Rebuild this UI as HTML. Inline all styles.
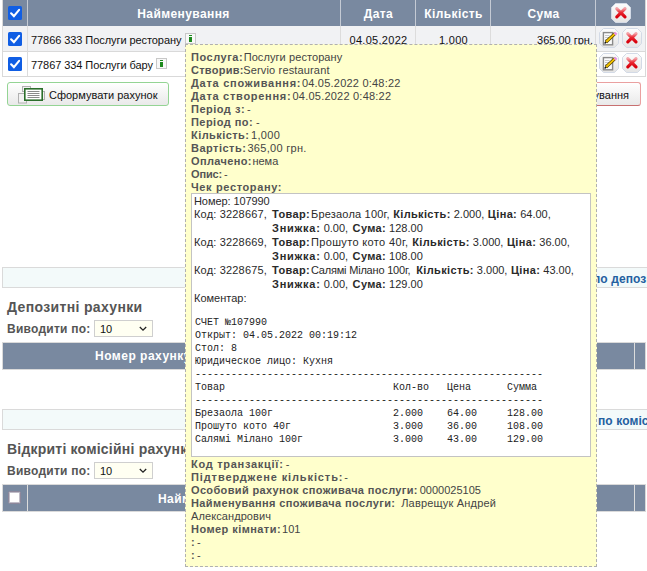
<!DOCTYPE html>
<html><head><meta charset="utf-8">
<style>
html,body{margin:0;padding:0;background:#fff;}
body{width:647px;height:571px;overflow:hidden;position:relative;font-family:"Liberation Sans",sans-serif;}
.a{position:absolute;white-space:pre;}
.hd{position:absolute;background:#7989a0;}
.vl{position:absolute;width:1px;}
.ht{position:absolute;color:#fff;font-weight:bold;font-size:12px;line-height:14px;white-space:pre;letter-spacing:0.4px;}
.td{position:absolute;color:#111;font-size:11px;line-height:13px;white-space:pre;}
.rw{letter-spacing:-0.07px;}
.cb{position:absolute;width:14px;height:14px;border-radius:1.5px;background:#105ee4;}
.cb svg{position:absolute;left:0;top:0;}
.oct{position:absolute;width:20px;height:20px;}
.info{position:absolute;width:9px;height:9px;border:1px solid #c8c8c8;background:#f8f8f8;}
.info:before{content:"";position:absolute;left:3px;top:1px;width:3px;height:1px;background:#1d8a1d;}
.info:after{content:"";position:absolute;left:3px;top:3px;width:3px;height:5px;background:#1d8a1d;}
.sec{position:absolute;color:#555;font-weight:bold;white-space:pre;}
.sel{position:absolute;width:57px;height:15px;border:1px solid #cfcfcf;background:#fffff2;}
.tt{position:absolute;left:185px;top:44px;width:410px;height:521px;border:1px dashed #b0b0b0;background:#ffffcc;}
.ln{position:absolute;left:191px;font-size:11px;line-height:13px;color:#444;white-space:pre;}
.ln b{color:#555;}
.rc{position:absolute;left:194px;font-size:11px;line-height:13px;color:#2a2a2a;white-space:pre;}
.rc b{letter-spacing:0.35px;}
.ib{display:inline-block;}
.mono{position:absolute;left:195px;font-family:"Liberation Mono",monospace;font-size:10px;line-height:13px;color:#222;white-space:pre;}
</style></head><body>

<!-- ===== top table ===== -->
<div class="hd" style="left:2px;top:0;width:643px;height:26px;"></div>
<div style="position:absolute;left:2px;top:26px;width:643px;height:25px;background:#f1f2f4;"></div>
<div style="position:absolute;left:2px;top:51px;width:643px;height:1px;background:#d9d9d9;"></div>
<div style="position:absolute;left:2px;top:76px;width:643px;height:1px;background:#d9d9d9;"></div>
<div style="position:absolute;left:2px;top:0;width:1px;height:77px;background:#d9d9d9;"></div>
<div style="position:absolute;left:645px;top:0;width:1px;height:77px;background:#d9d9d9;"></div>
<!-- header dividers -->
<div class="vl" style="left:27px;top:0;height:26px;background:#c4cad4;"></div>
<div class="vl" style="left:340px;top:0;height:26px;background:#c4cad4;"></div>
<div class="vl" style="left:415px;top:0;height:26px;background:#c4cad4;"></div>
<div class="vl" style="left:490px;top:0;height:26px;background:#c4cad4;"></div>
<div class="vl" style="left:595px;top:0;height:26px;background:#c4cad4;"></div>
<!-- body dividers -->
<div class="vl" style="left:27px;top:26px;height:50px;background:#dcdcdc;"></div>
<div class="vl" style="left:340px;top:26px;height:50px;background:#dcdcdc;"></div>
<div class="vl" style="left:415px;top:26px;height:50px;background:#dcdcdc;"></div>
<div class="vl" style="left:490px;top:26px;height:50px;background:#dcdcdc;"></div>
<div class="vl" style="left:595px;top:26px;height:50px;background:#dcdcdc;"></div>

<div class="ht" style="left:27px;width:313px;text-align:center;top:7px;">Найменування</div>
<div class="ht" style="left:341px;width:75px;text-align:center;top:7px;">Дата</div>
<div class="ht" style="left:416px;width:75px;text-align:center;top:7px;">Кількість</div>
<div class="ht" style="left:491px;width:105px;text-align:center;top:7px;">Сума</div>

<!-- checkboxes -->
<div class="cb" style="left:8px;top:6px;"><svg width="14" height="14" viewBox="0 0 14 14"><path d="M3.1 7.3 L5.9 10.1 L11.1 3.9" fill="none" stroke="#fff" stroke-width="2.1" stroke-linecap="round"/></svg></div>
<div class="cb" style="left:8px;top:32px;"><svg width="14" height="14" viewBox="0 0 14 14"><path d="M3.1 7.3 L5.9 10.1 L11.1 3.9" fill="none" stroke="#fff" stroke-width="2.1" stroke-linecap="round"/></svg></div>
<div class="cb" style="left:8px;top:57px;"><svg width="14" height="14" viewBox="0 0 14 14"><path d="M3.1 7.3 L5.9 10.1 L11.1 3.9" fill="none" stroke="#fff" stroke-width="2.1" stroke-linecap="round"/></svg></div>

<div class="td rw" style="left:31px;top:34px;">77866 333 Послуги ресторану</div>
<div class="info" style="left:185px;top:33px;"></div>
<div class="td rw" style="left:31px;top:59px;">77867 334 Послуги бару</div>
<div class="info" style="left:156px;top:58px;"></div>
<div class="td" style="left:341px;width:75px;text-align:center;top:34px;letter-spacing:0.3px;">04.05.2022</div>
<div class="td" style="left:416px;width:75px;text-align:center;top:34px;letter-spacing:0.25px;">1.000</div>
<div class="td" style="left:491px;width:102px;text-align:right;top:34px;">365.00 грн.</div>

<!-- octagon icon buttons -->
<svg style="position:absolute;left:0;top:0" width="647" height="80">
  <defs>
    <linearGradient id="og" x1="0" y1="0" x2="0" y2="1"><stop offset="0" stop-color="#fdfdfd"/><stop offset="1" stop-color="#e4e4e4"/></linearGradient>
    <linearGradient id="xg" x1="0" y1="0" x2="0" y2="1"><stop offset="0" stop-color="#f4a0a6"/><stop offset="0.45" stop-color="#ea2a34"/><stop offset="1" stop-color="#d8000c"/></linearGradient>
    <g id="oct"><path d="M4.5 0.5 H15.5 L19.5 4.5 V15.5 L15.5 19.5 H4.5 L0.5 15.5 V4.5 Z" fill="url(#og)" stroke="#d3dae6"/></g>
    <g id="xx"><path d="M5.8 5.6 L14 13.8 M14 5.6 L5.8 13.8" stroke="url(#xg)" stroke-width="3.2" stroke-linecap="round"/></g>
    <g id="ed"><rect x="4.4" y="4.6" width="9.2" height="12.2" fill="#fbfbfb" stroke="#8a8a8a" stroke-width="1.4"/>
      <path d="M6 7.5h4.5M6 9.5h4M6 11.5h3" stroke="#c4c4c4" stroke-width="0.9"/>
      <path d="M7 14 L16.2 5.4" stroke="#4a3a00" stroke-width="3.2"/>
      <path d="M7 14 L16.2 5.4" stroke="#f4c400" stroke-width="1.9"/>
      <path d="M15.4 4.6 L17.6 6.6" stroke="#e890e0" stroke-width="2.4"/>
      <path d="M5.6 15.4 L7.2 13.8" stroke="#111" stroke-width="1.4"/></g>
  </defs>
  <g transform="translate(611,3)"><use href="#oct"/><use href="#xx"/></g>
  <g transform="translate(599,28)"><use href="#oct"/><use href="#ed"/></g>
  <g transform="translate(622,28)"><use href="#oct"/><use href="#xx"/></g>
  <g transform="translate(599,53)"><use href="#oct"/><use href="#ed"/></g>
  <g transform="translate(622,53)"><use href="#oct"/><use href="#xx"/></g>
</svg>

<!-- buttons -->
<div style="position:absolute;left:7px;top:82px;width:160px;height:22px;border:1px solid #94d494;border-radius:3px;background:linear-gradient(#ffffff,#e9e9e9);"></div>
<svg style="position:absolute;left:17px;top:85px" width="30" height="20">
  <rect x="1.5" y="8.5" width="8" height="9.5" fill="#f2f2f2" stroke="#b0b0b0"/>
  <rect x="5.5" y="1.5" width="8" height="5" fill="#f2f2f2" stroke="#b0b0b0"/>
  <rect x="22.5" y="6.5" width="5" height="8" fill="#f2f2f2" stroke="#b0b0b0"/>
  <rect x="7.8" y="3.8" width="17.4" height="11.4" fill="#fff" stroke="#2b6e2b" stroke-width="1.6"/>
  <path d="M10.5 6.5h12M10.5 8.5h12M10.5 10.5h12M10.5 12.5h12" stroke="#8a8a8a" stroke-width="1"/>
</svg>
<div class="td" style="left:49px;top:89px;">Сформувати рахунок</div>

<div style="position:absolute;left:470px;top:82px;width:169px;height:22px;border:1px solid #eaa0a0;border-bottom-color:#c87070;border-radius:3px;background:linear-gradient(#ffffff,#e9e9e9);"></div>
<div class="td" style="left:470px;width:159px;text-align:right;top:89px;">Скасувати формування</div>

<!-- strip 1 -->
<div style="position:absolute;left:2px;top:267px;width:660px;height:19px;border:1px solid #dadada;background:#f3fafa;"></div>
<div class="a" style="left:593px;top:272px;font-size:12px;line-height:14px;font-weight:bold;color:#2360a0;letter-spacing:0.1px;">по депозитах</div>

<div class="sec" style="left:7px;top:299px;font-size:14px;line-height:16px;letter-spacing:0.35px;">Депозитні рахунки</div>
<div class="sec" style="left:7px;top:322px;font-size:12px;line-height:14px;letter-spacing:0.25px;">Виводити по:</div>
<div class="sel" style="left:94px;top:320px;"></div>
<div class="td" style="left:100px;top:323px;">10</div>
<svg style="position:absolute;left:139px;top:326px" width="9" height="6"><path d="M0.8 1 L4 4.2 L7.2 1" fill="none" stroke="#222" stroke-width="1.3"/></svg>

<div class="hd" style="left:2px;top:342px;width:642px;height:26px;border:1px solid #dadada;"></div>
<div class="vl" style="left:634px;top:343px;height:26px;background:#dcdcdc;"></div>
<div class="ht" style="left:95px;top:349px;letter-spacing:0.5px;">Номер рахунку</div>

<!-- strip 2 -->
<div style="position:absolute;left:2px;top:409px;width:660px;height:19px;border:1px solid #dadada;background:#f3fafa;"></div>
<div class="a" style="left:598px;top:414px;font-size:12px;line-height:14px;font-weight:bold;color:#2360a0;letter-spacing:0.1px;">по комісійних</div>

<div class="sec" style="left:7px;top:441px;font-size:14px;line-height:16px;letter-spacing:0.21px;">Відкриті комісійні рахунки</div>
<div class="sec" style="left:7px;top:464px;font-size:12px;line-height:14px;letter-spacing:0.25px;">Виводити по:</div>
<div class="sel" style="left:94px;top:462px;"></div>
<div class="td" style="left:100px;top:465px;">10</div>
<svg style="position:absolute;left:139px;top:468px" width="9" height="6"><path d="M0.8 1 L4 4.2 L7.2 1" fill="none" stroke="#222" stroke-width="1.3"/></svg>

<div class="hd" style="left:2px;top:484px;width:642px;height:26px;border:1px solid #dadada;"></div>
<div class="vl" style="left:27px;top:485px;height:26px;background:#dcdcdc;"></div>
<div class="vl" style="left:634px;top:485px;height:26px;background:#dcdcdc;"></div>
<div style="position:absolute;left:8px;top:491px;width:11px;height:11px;border:1px solid #8d879b;border-radius:2px;background:#fff;box-shadow:inset 0 0 0 1px rgba(141,135,155,0.55);"></div>
<div class="ht" style="left:158px;top:492px;">Найменування</div>

<!-- ===== tooltip ===== -->
<div class="tt"></div>
<div class="ln" style="top:51px;"><b style="letter-spacing:0.53px;display:inline-block;width:52.7px;">Послуга:</b><span style="letter-spacing:0.08px">Послуги ресторану</span></div>
<div class="ln" style="top:64px;"><b style="letter-spacing:0.255px;display:inline-block;width:52.3px;">Створив:</b><span style="letter-spacing:0.15px">Servio restaurant</span></div>
<div class="ln" style="top:77px;"><b style="letter-spacing:0.73px;display:inline-block;width:110.9px;">Дата споживання:</b><span style="letter-spacing:0.22px">04.05.2022 0:48:22</span></div>
<div class="ln" style="top:90px;"><b style="letter-spacing:0.72px;display:inline-block;width:101.5px;">Дата створення:</b><span style="letter-spacing:0.22px">04.05.2022 0:48:22</span></div>
<div class="ln" style="top:103px;"><b style="letter-spacing:0.5px;display:inline-block;width:55.9px;">Період з:</b>-</div>
<div class="ln" style="top:116px;"><b style="letter-spacing:0.46px;display:inline-block;width:65.1px;">Період по:</b>-</div>
<div class="ln" style="top:129px;"><b style="letter-spacing:0.43px;display:inline-block;width:60.1px;">Кількість:</b><span style="letter-spacing:0.3px">1,000</span></div>
<div class="ln" style="top:142px;"><b style="letter-spacing:0.48px;display:inline-block;width:56.4px;">Вартість:</b><span style="letter-spacing:0.3px">365,00 грн.</span></div>
<div class="ln" style="top:155px;"><b style="letter-spacing:0.36px;display:inline-block;width:61.4px;">Оплачено:</b>нема</div>
<div class="ln" style="top:168px;"><b style="letter-spacing:-0.14px;display:inline-block;width:32.9px;">Опис:</b>-</div>
<div class="ln" style="top:181px;"><b style="letter-spacing:0.63px;">Чек ресторану:</b></div>

<div style="position:absolute;left:191px;top:193px;width:398px;height:262px;border:1px solid #c3c3c3;background:#fff;"></div>
<div class="rc" style="top:195px;letter-spacing:-0.08px;">Номер: 107990</div>
<div class="rc" style="top:208px;letter-spacing:0.18px;">Код: 3228667,</div>
<div class="rc" style="top:208px;left:272px;line-height:13.6px;"><b>Товар:</b><span class="ib" style="margin-left:1px;width:82.2px;letter-spacing:0.2px;">Брезаола 100г,</span><span class="ib" style="width:94.7px;"><b>Кількість:</b> 2.000,</span><b>Ціна:</b> 64.00,
<span class="ib" style="width:80.6px;"><b style="letter-spacing:0.75px">Знижка:</b> 0.00,</span><b>Сума:</b> 128.00</div>
<div class="rc" style="top:236px;letter-spacing:0.18px;">Код: 3228669,</div>
<div class="rc" style="top:236px;left:272px;line-height:13.6px;"><b>Товар:</b><span class="ib" style="margin-left:1px;width:101.3px;letter-spacing:0.35px;">Прошуто кото 40г,</span><span class="ib" style="width:94.7px;"><b>Кількість:</b> 3.000,</span><b>Ціна:</b> 36.00,
<span class="ib" style="width:80.6px;"><b style="letter-spacing:0.75px">Знижка:</b> 0.00,</span><b>Сума:</b> 108.00</div>
<div class="rc" style="top:264px;letter-spacing:0.18px;">Код: 3228675,</div>
<div class="rc" style="top:264px;left:272px;line-height:13.6px;"><b>Товар:</b><span class="ib" style="margin-left:1px;width:105.3px;letter-spacing:-0.2px;">Салямі Мілано 100г,</span><span class="ib" style="width:94.7px;"><b>Кількість:</b> 3.000,</span><b>Ціна:</b> 43.00,
<span class="ib" style="width:80.6px;"><b style="letter-spacing:0.75px">Знижка:</b> 0.00,</span><b>Сума:</b> 129.00</div>
<div class="rc" style="top:292px;">Коментар:</div>
<div class="mono" style="top:316px;">СЧЕТ №107990
Открыт: 04.05.2022 00:19:12
Стол: 8
Юридическое лицо: Кухня
----------------------------------------------------------
Товар                            Кол-во   Цена      Сумма
----------------------------------------------------------
Брезаола 100г                    2.000    64.00     128.00
Прошуто кото 40г                 3.000    36.00     108.00
Салямі Мілано 100г               3.000    43.00     129.00</div>

<div class="ln" style="top:458px;"><b style="letter-spacing:0.72px;display:inline-block;width:94.8px;">Код транзакції:</b>-</div>
<div class="ln" style="top:471px;"><b style="letter-spacing:0.89px;display:inline-block;width:153.3px;">Підтверджене кількість:</b>-</div>
<div class="ln" style="top:484px;"><b style="letter-spacing:0.35px;display:inline-block;width:228.7px;">Особовий рахунок споживача послуги:</b>0000025105</div>
<div class="ln" style="top:497px;"><b style="letter-spacing:0.38px;display:inline-block;width:210.2px;">Найменування споживача послуги:</b><span style="letter-spacing:0.18px">Лаврещук Андрей</span></div>
<div class="ln" style="top:510px;letter-spacing:0.09px;">Александрович</div>
<div class="ln" style="top:523px;"><b style="letter-spacing:0.44px;display:inline-block;width:91.1px;">Номер кімнати:</b>101</div>
<div class="ln" style="top:536px;"><b style="letter-spacing:0.38px;display:inline-block;width:5.9px;">:</b>-</div>
<div class="ln" style="top:549px;"><b style="letter-spacing:0.38px;display:inline-block;width:5.9px;">:</b>-</div>

</body></html>
